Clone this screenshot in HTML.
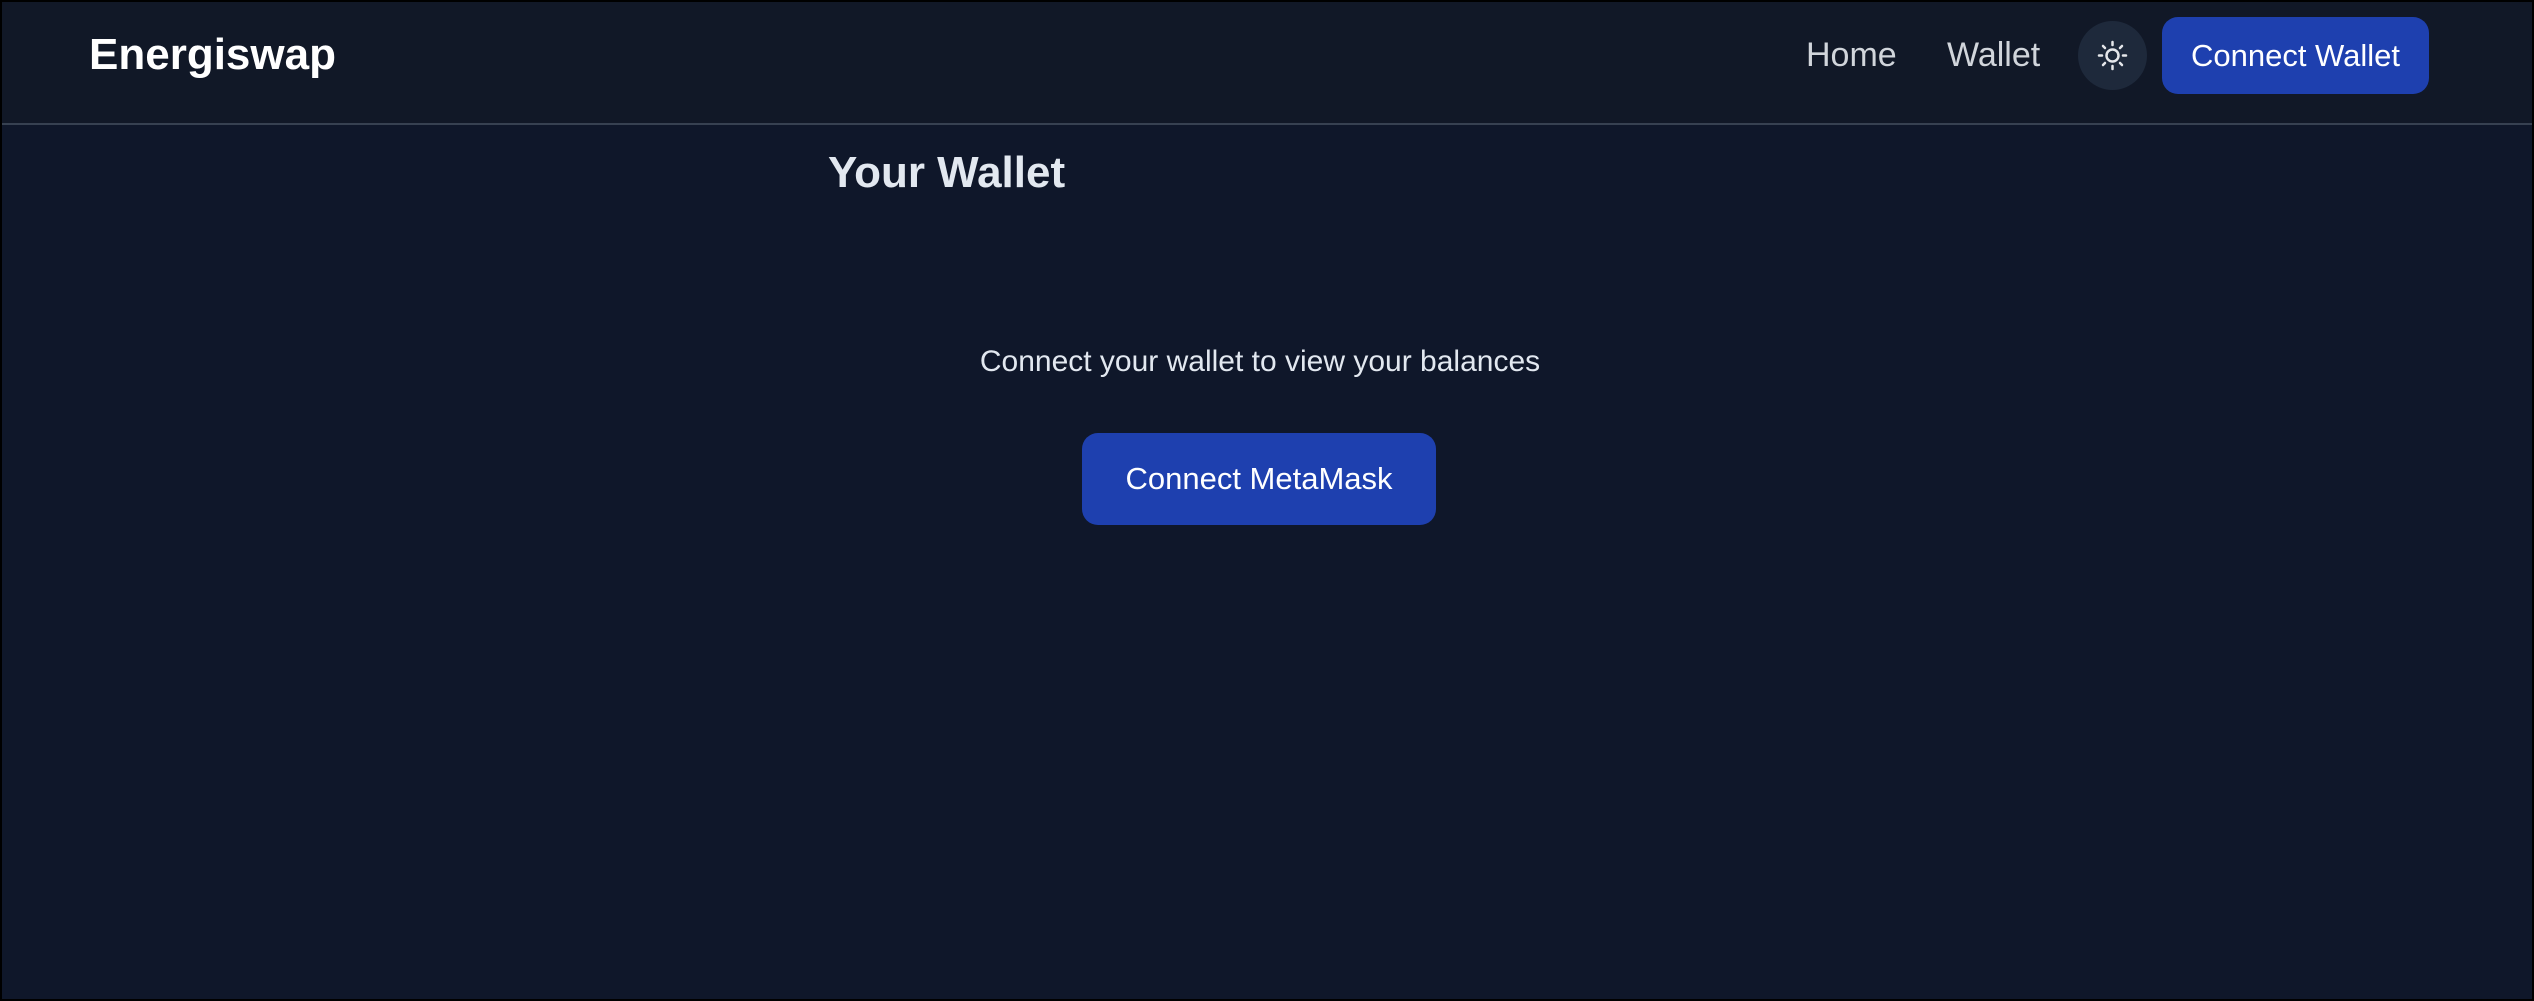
<!DOCTYPE html>
<html><head><meta charset="utf-8"><style>
*{margin:0;padding:0;box-sizing:border-box}
html,body{width:2534px;height:1001px;overflow:hidden;background:#0f172a;font-family:"Liberation Sans",sans-serif}
body{border:2px solid #000;position:relative}
.hdr{position:absolute;left:0;top:0;width:100%;height:123px;border-bottom:2px solid #374151;background:#111827}
.abs{position:absolute;white-space:nowrap}
.logo{left:87px;top:28px;font-size:44px;font-weight:bold;color:#fff;letter-spacing:0}
.nav{top:34px;font-size:34px;color:#d1d5db}
.circ{left:2076px;top:19px;width:69px;height:69px;border-radius:50%;background:#1e293b}
.btn{background:#1e40af;color:#fff;border-radius:16px;display:flex;align-items:center;justify-content:center}
</style></head><body>
<div class="hdr"></div>
<div class="abs logo">Energiswap</div>
<div class="abs nav" style="left:1804px">Home</div>
<div class="abs nav" style="left:1945px">Wallet</div>
<div class="abs circ"><svg width="69" height="69" viewBox="0 0 69 69" fill="none" stroke="#e5e7eb" stroke-width="2.5" stroke-linecap="round"><circle cx="34.5" cy="34.5" r="6"/><path d="M34.5 21v3M34.5 45v3M21 34.5h3M45 34.5h3M25 25l2 2M42 42l2 2M25 44l2-2M42 27l2-2"/></svg></div>
<div class="abs btn" style="left:2160px;top:15px;width:267px;height:77px;font-size:31px">Connect Wallet</div>
<div class="abs" style="left:826px;top:146px;font-size:44px;font-weight:bold;color:#e2e8f0;letter-spacing:0">Your Wallet</div>
<div class="abs" style="left:0;width:2516px;text-align:center;top:343px;font-size:30px;color:#e2e8f0">Connect your wallet to view your balances</div>
<div class="abs btn" style="left:1080px;top:431px;width:354px;height:92px;font-size:31px">Connect MetaMask</div>
</body></html>
